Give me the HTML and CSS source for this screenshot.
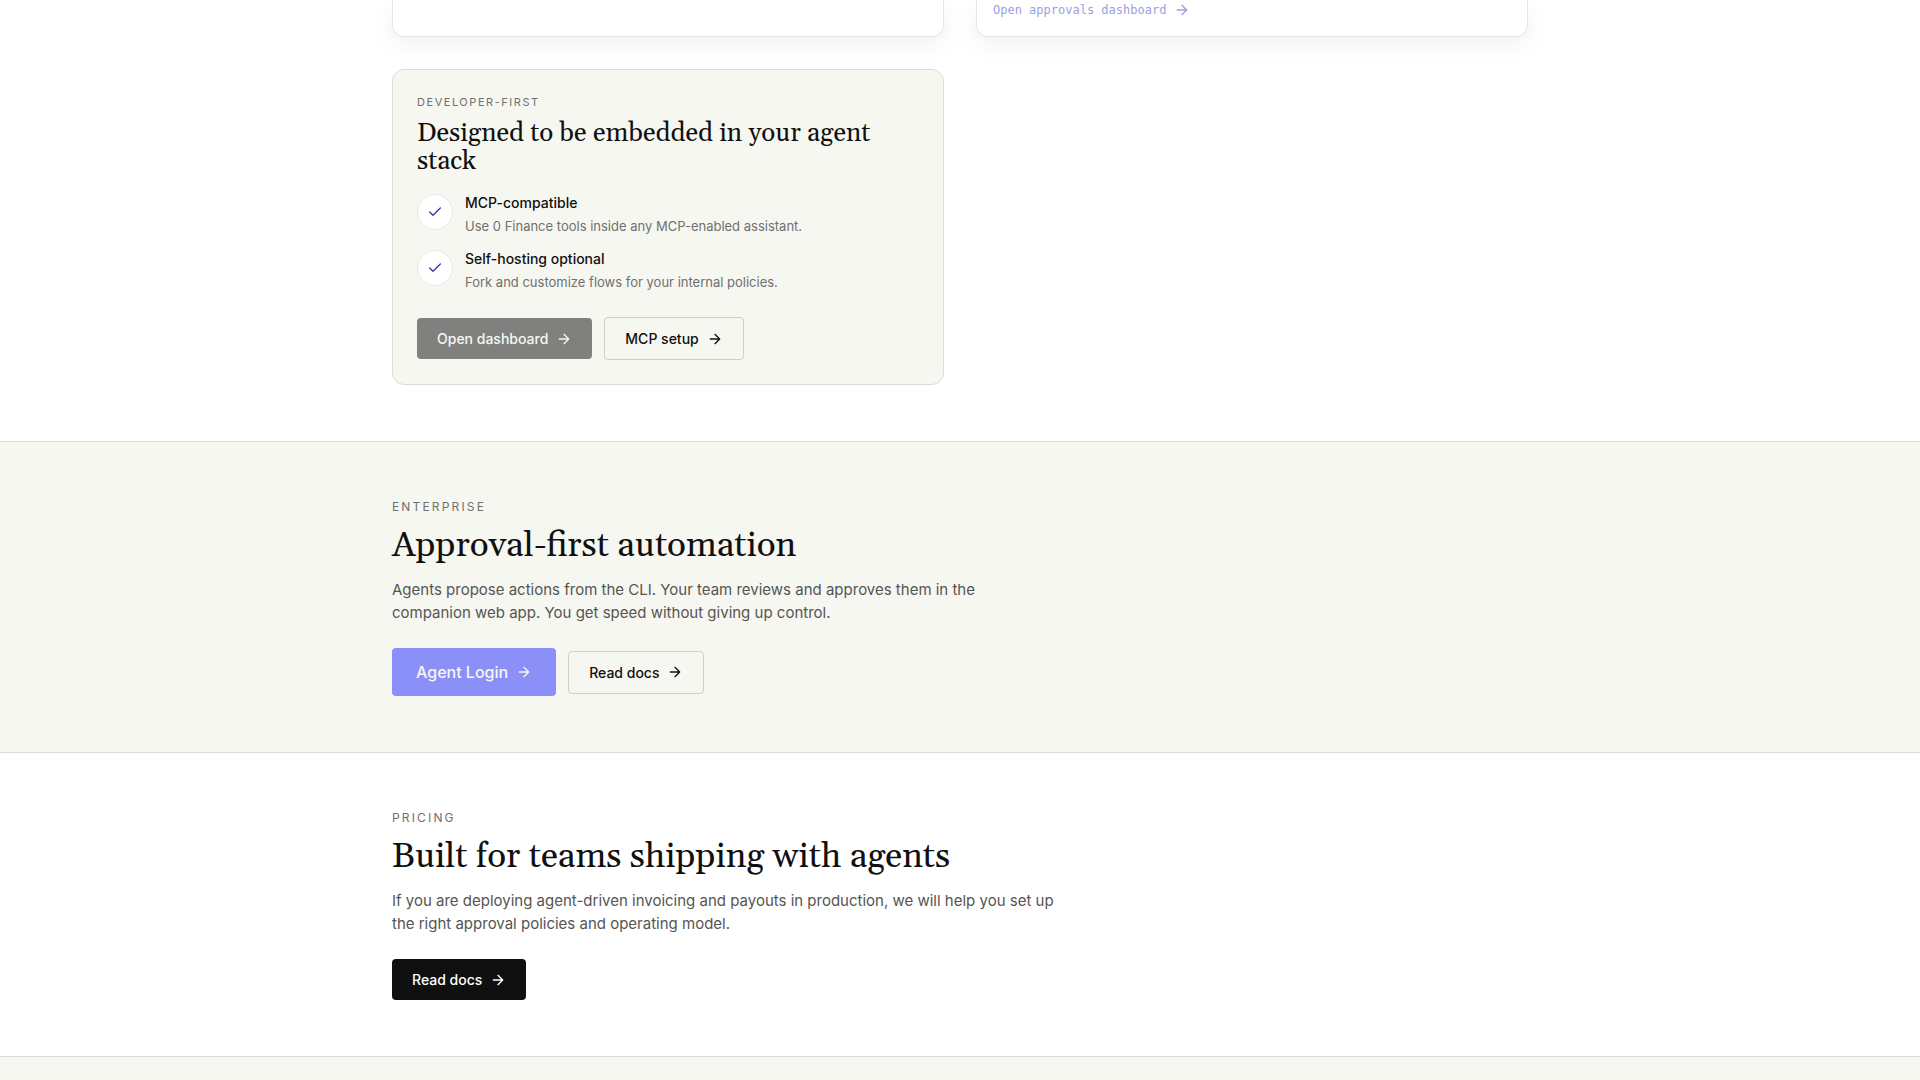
FILE: index.html
```html
<!DOCTYPE html>
<html lang="en">
<head>
  <meta charset="UTF-8" />
  <meta name="viewport" content="width=device-width, initial-scale=1" />
  <title>0 Finance</title>
  <link rel="stylesheet" href="styles.css">
</head>
<body>
  <svg class="sprite" aria-hidden="true">
    <symbol id="arrow" viewBox="0 0 24 24">
      <path d="M5 12h14M12 5l7 7-7 7" />
    </symbol>
    <symbol id="check" viewBox="0 0 24 24">
      <path d="M20 6L9 17l-5-5" />
    </symbol>
  </svg>

  <section class="features">
    <div class="container card-grid">
      <div class="card card-end"></div>
      <div class="card card-end">
        <a class="mono-link" href="#approvals">Open approvals dashboard <svg class="icon"><use href="#arrow" /></svg></a>
      </div>

      <div class="card card-tint">
        <p class="eyebrow eyebrow-small">Developer-first</p>
        <h3>Designed to be embedded in your agent stack</h3>
        <ul class="check-list">
          <li>
            <span class="check"><svg class="icon"><use href="#check" /></svg></span>
            <div>
              <h4>MCP-compatible</h4>
              <p>Use 0 Finance tools inside any MCP-enabled assistant.</p>
            </div>
          </li>
          <li>
            <span class="check"><svg class="icon"><use href="#check" /></svg></span>
            <div>
              <h4>Self-hosting optional</h4>
              <p>Fork and customize flows for your internal policies.</p>
            </div>
          </li>
        </ul>
        <div class="actions">
          <a class="btn btn-muted" href="#dashboard">Open dashboard <svg class="icon"><use href="#arrow" /></svg></a>
          <a class="btn btn-outline" href="#mcp">MCP setup <svg class="icon"><use href="#arrow" /></svg></a>
        </div>
      </div>
    </div>
  </section>

  <section class="band band-tint">
    <div class="container">
      <p class="eyebrow">Enterprise</p>
      <h2>Approval-first automation</h2>
      <p class="lead">Agents propose actions from the CLI. Your team reviews and approves them in the companion web app. You get speed without giving up control.</p>
      <div class="actions">
        <a class="btn btn-primary" href="#login">Agent Login <svg class="icon"><use href="#arrow" /></svg></a>
        <a class="btn btn-outline" href="#docs">Read docs <svg class="icon"><use href="#arrow" /></svg></a>
      </div>
    </div>
  </section>

  <section class="band" id="pricing">
    <div class="container">
      <p class="eyebrow">Pricing</p>
      <h2>Built for teams shipping with agents</h2>
      <p class="lead lead-wide">If you are deploying agent-driven invoicing and payouts in production, we will help you set up the right approval policies and operating model.</p>
      <div class="actions">
        <a class="btn btn-dark" href="#docs">Read docs <svg class="icon"><use href="#arrow" /></svg></a>
      </div>
    </div>
  </section>

  <footer class="footer"></footer>
</body>
</html>
```
FILE: styles.css
```css
* {
  box-sizing: border-box;
}

body {
  margin: 0;
  font-family: Inter, "Liberation Sans", sans-serif;
  background: #fff;
  color: #101010;
}

h2, h3, h4, p, ul {
  margin: 0;
  padding: 0;
}

.sprite {
  display: none;
}

.icon {
  width: 16px;
  height: 16px;
  fill: none;
  stroke: currentColor;
  stroke-width: 2;
  stroke-linecap: round;
  stroke-linejoin: round;
}

.container {
  max-width: 1200px;
  margin: 0 auto;
  padding: 0 32px;
}

/* Feature cards */
.features {
  padding-bottom: 56px;
}

.card-grid {
  display: grid;
  grid-template-columns: 1fr 1fr;
  gap: 32px;
}

.card {
  padding: 24px;
  border: 1px solid #e6e6e6;
  border-radius: 12px;
  background: #fff;
}

/* bottom edge of the first row of cards */
.card-end {
  padding: 0 16px 16px;
  border-top: none;
  border-radius: 0 0 12px 12px;
  box-shadow: 0 8px 24px rgba(16, 16, 16, 0.06);
}

.card-tint {
  background: #f6f7f1;
  border-color: #dcddd8;
}

.mono-link {
  display: flex;
  align-items: center;
  gap: 8px;
  font-family: Consolas, "DejaVu Sans Mono", monospace;
  font-size: 12px;
  line-height: 20px;
  color: #9b9fe0;
  text-decoration: none;
}

.eyebrow {
  font-size: 12px;
  line-height: 18px;
  letter-spacing: 0.18em;
  text-transform: uppercase;
  color: #70706e;
  margin-bottom: 10px;
}

.eyebrow-small {
  font-size: 11px;
  line-height: 16px;
  letter-spacing: 0.14em;
}

h2, h3 {
  font-family: Georgia, Gelasio, "Liberation Serif", serif;
  font-weight: 400;
}

h2 {
  font-size: 35px;
  line-height: 40px;
}

h3 {
  font-size: 26px;
  line-height: 28px;
}

.check-list {
  list-style: none;
  display: grid;
  gap: 12px;
  margin: 17px 0 24px;
}

.check-list li {
  display: flex;
  gap: 12px;
  padding-bottom: 2px;
}

.check {
  display: flex;
  align-items: center;
  justify-content: center;
  flex-shrink: 0;
  width: 36px;
  height: 36px;
  margin-top: 1px;
  border: 1px solid #e8e8e6;
  border-radius: 50%;
  background: #fff;
  color: #3a3aa8;
}

.check-list h4 {
  font-size: 14px;
  line-height: 20px;
  font-weight: 500;
}

.check-list p {
  margin-top: 4px;
  font-size: 13px;
  line-height: 18px;
  color: #70706e;
}

.actions {
  display: flex;
  align-items: center;
  gap: 12px;
}

.btn {
  display: inline-flex;
  align-items: center;
  gap: 8px;
  padding: 10px 20px;
  border-radius: 4px;
  font-size: 14px;
  line-height: 21px;
  font-weight: 500;
  text-decoration: none;
}

.btn-muted {
  background: #80807e;
  color: #f6f7f1;
}

.btn-outline {
  border: 1px solid #cfd0ca;
  color: #101010;
}

.btn-primary {
  padding: 12px 24px;
  background: #8b8ff8;
  color: #f6f7f1;
  font-size: 16px;
  line-height: 24px;
}

.btn-dark {
  background: #101010;
  color: #fff;
}

/* Full-width sections */
.band {
  padding: 56px 0;
  border-top: 1px solid #dcddd8;
}

.band-tint {
  background: #f6f7f1;
}

.lead {
  max-width: 600px;
  margin: 12px 0 24px;
  font-size: 15px;
  line-height: 23px;
  color: #555553;
}

.lead-wide {
  max-width: 672px;
}

.footer {
  min-height: 56px;
  border-top: 1px solid #dcddd8;
  background: #f6f7f1;
}
```
